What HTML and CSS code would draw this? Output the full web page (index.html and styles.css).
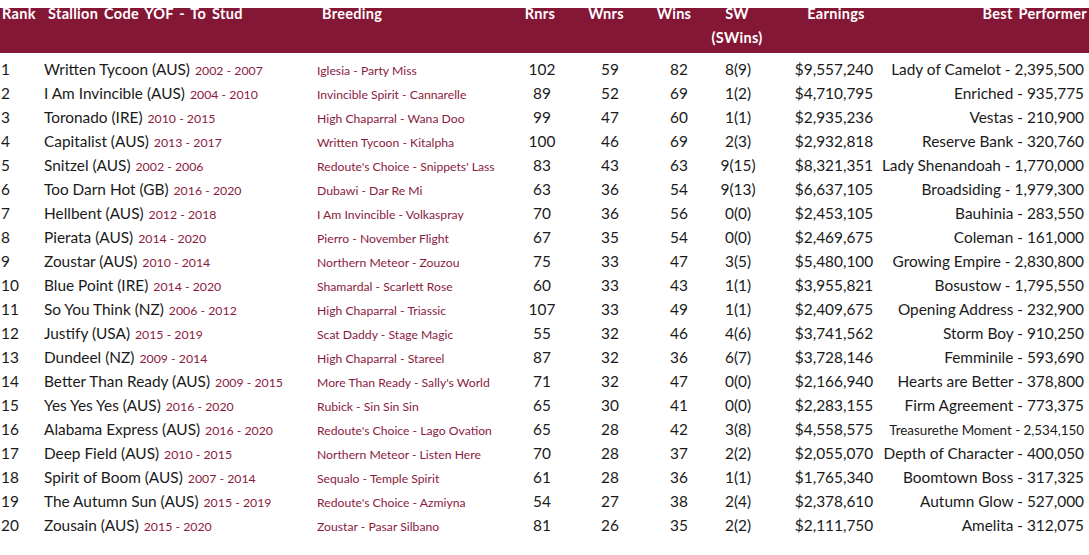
FILE: index.html
```html
<!DOCTYPE html>
<html lang="en">
<head>
<meta charset="utf-8">
<title>Leading Sires</title>
<link rel="stylesheet" href="styles.css">
</head>
<body>
<div class="table">
  <div class="row head">
    <div class="c rank">Rank</div>
    <div class="c stallion">Stallion Code YOF - To Stud</div>
    <div class="c breeding">Breeding</div>
    <div class="c num h-rnrs">Rnrs</div>
    <div class="c num h-wnrs">Wnrs</div>
    <div class="c num h-wins">Wins</div>
    <div class="c num h-sw"><div class="stack">SW<br>(SWins)</div></div>
    <div class="c num h-earn">Earnings</div>
    <div class="c best h-best">Best Performer</div>
  </div>
  <div class="body">
    <div class="row r"><div class="rank">1</div><div class="stallion">Written Tycoon (AUS) <span class="yrs">2002 - 2007</span></div><div class="breeding">Iglesia - Party Miss</div><div class="num">102</div><div class="num">59</div><div class="num">82</div><div class="num">8(9)</div><div class="num">$9,557,240</div><div class="best">Lady of Camelot - 2,395,500</div></div>
    <div class="row r"><div class="rank">2</div><div class="stallion">I Am Invincible (AUS) <span class="yrs">2004 - 2010</span></div><div class="breeding">Invincible Spirit - Cannarelle</div><div class="num">89</div><div class="num">52</div><div class="num">69</div><div class="num">1(2)</div><div class="num">$4,710,795</div><div class="best">Enriched - 935,775</div></div>
    <div class="row r"><div class="rank">3</div><div class="stallion">Toronado (IRE) <span class="yrs">2010 - 2015</span></div><div class="breeding">High Chaparral - Wana Doo</div><div class="num">99</div><div class="num">47</div><div class="num">60</div><div class="num">1(1)</div><div class="num">$2,935,236</div><div class="best">Vestas - 210,900</div></div>
    <div class="row r"><div class="rank">4</div><div class="stallion">Capitalist (AUS) <span class="yrs">2013 - 2017</span></div><div class="breeding">Written Tycoon - Kitalpha</div><div class="num">100</div><div class="num">46</div><div class="num">69</div><div class="num">2(3)</div><div class="num">$2,932,818</div><div class="best">Reserve Bank - 320,760</div></div>
    <div class="row r"><div class="rank">5</div><div class="stallion">Snitzel (AUS) <span class="yrs">2002 - 2006</span></div><div class="breeding">Redoute's Choice - Snippets' Lass</div><div class="num">83</div><div class="num">43</div><div class="num">63</div><div class="num">9(15)</div><div class="num">$8,321,351</div><div class="best">Lady Shenandoah - 1,770,000</div></div>
    <div class="row r"><div class="rank">6</div><div class="stallion">Too Darn Hot (GB) <span class="yrs">2016 - 2020</span></div><div class="breeding">Dubawi - Dar Re Mi</div><div class="num">63</div><div class="num">36</div><div class="num">54</div><div class="num">9(13)</div><div class="num">$6,637,105</div><div class="best">Broadsiding - 1,979,300</div></div>
    <div class="row r"><div class="rank">7</div><div class="stallion">Hellbent (AUS) <span class="yrs">2012 - 2018</span></div><div class="breeding">I Am Invincible - Volkaspray</div><div class="num">70</div><div class="num">36</div><div class="num">56</div><div class="num">0(0)</div><div class="num">$2,453,105</div><div class="best">Bauhinia - 283,550</div></div>
    <div class="row r"><div class="rank">8</div><div class="stallion">Pierata (AUS) <span class="yrs">2014 - 2020</span></div><div class="breeding">Pierro - November Flight</div><div class="num">67</div><div class="num">35</div><div class="num">54</div><div class="num">0(0)</div><div class="num">$2,469,675</div><div class="best">Coleman - 161,000</div></div>
    <div class="row r"><div class="rank">9</div><div class="stallion">Zoustar (AUS) <span class="yrs">2010 - 2014</span></div><div class="breeding">Northern Meteor - Zouzou</div><div class="num">75</div><div class="num">33</div><div class="num">47</div><div class="num">3(5)</div><div class="num">$5,480,100</div><div class="best">Growing Empire - 2,830,800</div></div>
    <div class="row r"><div class="rank">10</div><div class="stallion">Blue Point (IRE) <span class="yrs">2014 - 2020</span></div><div class="breeding">Shamardal - Scarlett Rose</div><div class="num">60</div><div class="num">33</div><div class="num">43</div><div class="num">1(1)</div><div class="num">$3,955,821</div><div class="best">Bosustow - 1,795,550</div></div>
    <div class="row r"><div class="rank">11</div><div class="stallion">So You Think (NZ) <span class="yrs">2006 - 2012</span></div><div class="breeding">High Chaparral - Triassic</div><div class="num">107</div><div class="num">33</div><div class="num">49</div><div class="num">1(1)</div><div class="num">$2,409,675</div><div class="best">Opening Address - 232,900</div></div>
    <div class="row r"><div class="rank">12</div><div class="stallion">Justify (USA) <span class="yrs">2015 - 2019</span></div><div class="breeding">Scat Daddy - Stage Magic</div><div class="num">55</div><div class="num">32</div><div class="num">46</div><div class="num">4(6)</div><div class="num">$3,741,562</div><div class="best">Storm Boy - 910,250</div></div>
    <div class="row r"><div class="rank">13</div><div class="stallion">Dundeel (NZ) <span class="yrs">2009 - 2014</span></div><div class="breeding">High Chaparral - Stareel</div><div class="num">87</div><div class="num">32</div><div class="num">36</div><div class="num">6(7)</div><div class="num">$3,728,146</div><div class="best">Femminile - 593,690</div></div>
    <div class="row r"><div class="rank">14</div><div class="stallion">Better Than Ready (AUS) <span class="yrs">2009 - 2015</span></div><div class="breeding">More Than Ready - Sally's World</div><div class="num">71</div><div class="num">32</div><div class="num">47</div><div class="num">0(0)</div><div class="num">$2,166,940</div><div class="best">Hearts are Better - 378,800</div></div>
    <div class="row r"><div class="rank">15</div><div class="stallion">Yes Yes Yes (AUS) <span class="yrs">2016 - 2020</span></div><div class="breeding">Rubick - Sin Sin Sin</div><div class="num">65</div><div class="num">30</div><div class="num">41</div><div class="num">0(0)</div><div class="num">$2,283,155</div><div class="best">Firm Agreement - 773,375</div></div>
    <div class="row r"><div class="rank">16</div><div class="stallion">Alabama Express (AUS) <span class="yrs">2016 - 2020</span></div><div class="breeding">Redoute's Choice - Lago Ovation</div><div class="num">65</div><div class="num">28</div><div class="num">42</div><div class="num">3(8)</div><div class="num">$4,558,575</div><div class="best small">Treasurethe Moment - 2,534,150</div></div>
    <div class="row r"><div class="rank">17</div><div class="stallion">Deep Field (AUS) <span class="yrs">2010 - 2015</span></div><div class="breeding">Northern Meteor - Listen Here</div><div class="num">70</div><div class="num">28</div><div class="num">37</div><div class="num">2(2)</div><div class="num">$2,055,070</div><div class="best">Depth of Character - 400,050</div></div>
    <div class="row r"><div class="rank">18</div><div class="stallion">Spirit of Boom (AUS) <span class="yrs">2007 - 2014</span></div><div class="breeding">Sequalo - Temple Spirit</div><div class="num">61</div><div class="num">28</div><div class="num">36</div><div class="num">1(1)</div><div class="num">$1,765,340</div><div class="best">Boomtown Boss - 317,325</div></div>
    <div class="row r"><div class="rank">19</div><div class="stallion">The Autumn Sun (AUS) <span class="yrs">2015 - 2019</span></div><div class="breeding">Redoute's Choice - Azmiyna</div><div class="num">54</div><div class="num">27</div><div class="num">38</div><div class="num">2(4)</div><div class="num">$2,378,610</div><div class="best">Autumn Glow - 527,000</div></div>
    <div class="row r"><div class="rank">20</div><div class="stallion">Zousain (AUS) <span class="yrs">2015 - 2020</span></div><div class="breeding">Zoustar - Pasar Silbano</div><div class="num">81</div><div class="num">26</div><div class="num">35</div><div class="num">2(2)</div><div class="num">$2,111,750</div><div class="best">Amelita - 312,075</div></div>
  </div>
</div>
</body>
</html>
```
FILE: styles.css
```css
html, body {
  margin: 0;
  padding: 0;
  background: #ffffff;
}

.table {
  width: 1089px;
  font-family: Lato, "Open Sans", sans-serif;
  color: #1a1a1a;
}

.row {
  display: grid;
  grid-template-columns: 44px 273px 195px 60px 76px 62px 56px 136px 182px;
  padding-right: 5px;
  white-space: nowrap;
}

.num {
  display: flex;
  justify-content: center;
}

.best {
  display: flex;
  justify-content: flex-end;
}

/* header band */
.head {
  margin-top: 8px;
  height: 45px;
  background: #851736;
  color: #ffffff;
  font-weight: 700;
  font-size: 14.5px;
  line-height: 24px;
  letter-spacing: 0.3px;
  word-spacing: 2px;
  align-items: start;
}

.head .c {
  margin-top: -6px;
}

.head .rank { padding-left: 2px; }
.head .stallion { padding-left: 4px; }
.head .breeding { padding-left: 5px; }
.h-rnrs { padding-right: 4px; }
.h-wnrs { padding-right: 8px; }
.h-wins { padding-right: 10px; }
.h-sw { padding-right: 2px; }
.h-earn { padding-left: 4px; }
.h-best { margin-right: -3px; }

.stack {
  text-align: center;
}

/* body rows */
.body {
  padding-top: 4px;
}

.r {
  grid-template-rows: 24px;
  height: 24px;
  font-size: 15.4px;
  line-height: 24px;
  align-items: baseline;
}

.r .rank {
  padding-left: 1px;
}

.yrs {
  margin-left: 1px;
  font-size: 12.3px;
  color: #8a1b40;
}

.r .breeding {
  font-size: 12.2px;
  color: #8a1b40;
}

.best.small {
  font-size: 13.4px;
}
```
